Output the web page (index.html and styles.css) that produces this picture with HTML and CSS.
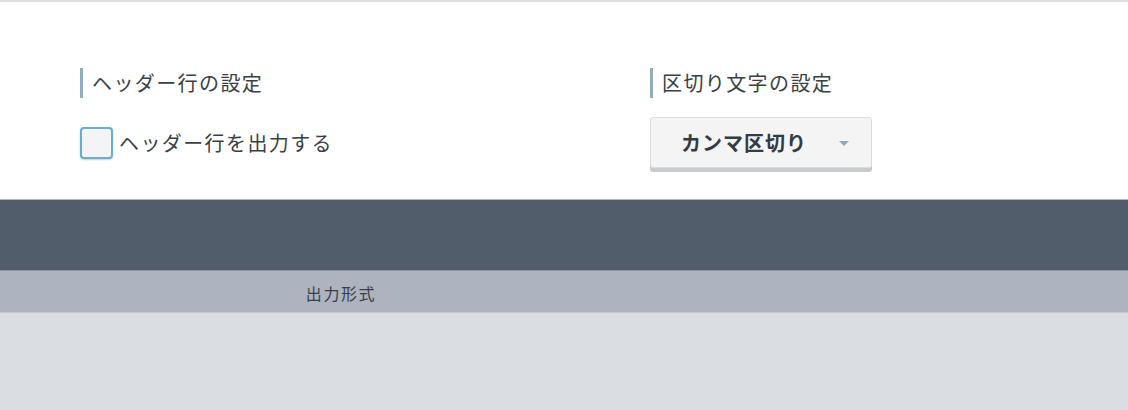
FILE: index.html
```html
<!DOCTYPE html>
<html lang="ja">

<head>
  <meta charset="UTF-8">
  <meta name="viewport" content="width=device-width, initial-scale=1.0">
  <title>出力設定</title>
  <link rel="stylesheet" href="styles.css">
</head>

<body>
  <div class="settings">
    <div class="setting header-setting">
      <h3 class="setting-title">ヘッダー行の設定</h3>
      <div class="setting-control">
        <label class="check">
          <input type="checkbox" id="header">
          <span class="check-box"></span>
          <span class="check-label">ヘッダー行を出力する</span>
        </label>
      </div>
    </div>

    <div class="setting">
      <h3 class="setting-title">区切り文字の設定</h3>
      <div class="setting-control">
        <div class="dropdown">
          <span class="dropdown-value">カンマ区切り</span>
          <span class="dropdown-arrow"></span>
        </div>
      </div>
    </div>
  </div>

  <div class="toolbar"></div>

  <div class="table-head">
    <div class="table-col">出力形式</div>
  </div>

  <div class="table-body"></div>
</body>

</html>
```

FILE: styles.css
```css
body {
  font-family: "Noto Sans CJK JP", "Noto Sans", sans-serif;
  margin: 0;
  color: #3a3f45;
  background: #dadde1;
}

.settings {
  display: flex;
  height: 197px;
  padding: 0 0 0 80px;
  background: #fff;
  border-top: 2px solid #dedede;
}

.setting {
  padding-top: 66px;
}

.header-setting {
  width: 570px;
}

.setting-title {
  margin: 0;
  padding-left: 9px;
  border-left: 3px solid #93adb9;
  font-size: 20px;
  font-weight: normal;
  line-height: 30px;
  letter-spacing: 1.4px;
}

.setting-control {
  display: flex;
  align-items: center;
  height: 51px;
  margin-top: 19px;
}

.check {
  display: flex;
  align-items: center;
  cursor: pointer;
}

.check input {
  display: none;
}

.check-box {
  width: 29px;
  height: 28px;
  border: 2px solid #68aed0;
  border-radius: 4px;
  background: #f4f4f4;
  box-shadow: 0 1px 2px rgba(0, 0, 0, 0.2);
}

.check-label {
  margin-left: 6px;
  font-size: 20px;
  letter-spacing: 1.4px;
}

.dropdown {
  display: flex;
  align-items: center;
  box-sizing: border-box;
  width: 222px;
  height: 51px;
  padding: 0 22px 0 30px;
  border: 1px solid #dcdcdc;
  border-radius: 3px;
  background: #f4f4f4;
  box-shadow: 0 4px 0 #c9cccf;
  cursor: pointer;
}

.dropdown-value {
  flex: 1;
  font-size: 20px;
  font-weight: bold;
  letter-spacing: 1px;
  color: #333b44;
}

.dropdown-arrow {
  width: 0;
  height: 0;
  border-left: 5px solid transparent;
  border-right: 5px solid transparent;
  border-top: 5px solid #8fa9b8;
  margin-top: 2px;
}

.toolbar {
  height: 70px;
  background: #525d6b;
  border-top: 1px solid #b4b8be;
}

.table-head {
  display: flex;
  height: 41px;
  background: #adb3bf;
  border-top: 1px solid #8b93a0;
  border-bottom: 1px solid #c3c8cf;
}

.table-col {
  width: 682px;
  text-align: center;
  font-size: 16px;
  line-height: 45px;
  letter-spacing: 1.6px;
  color: #3a3f45;
}

.table-body {
  height: 100px;
  background: #dadde1;
}
```
